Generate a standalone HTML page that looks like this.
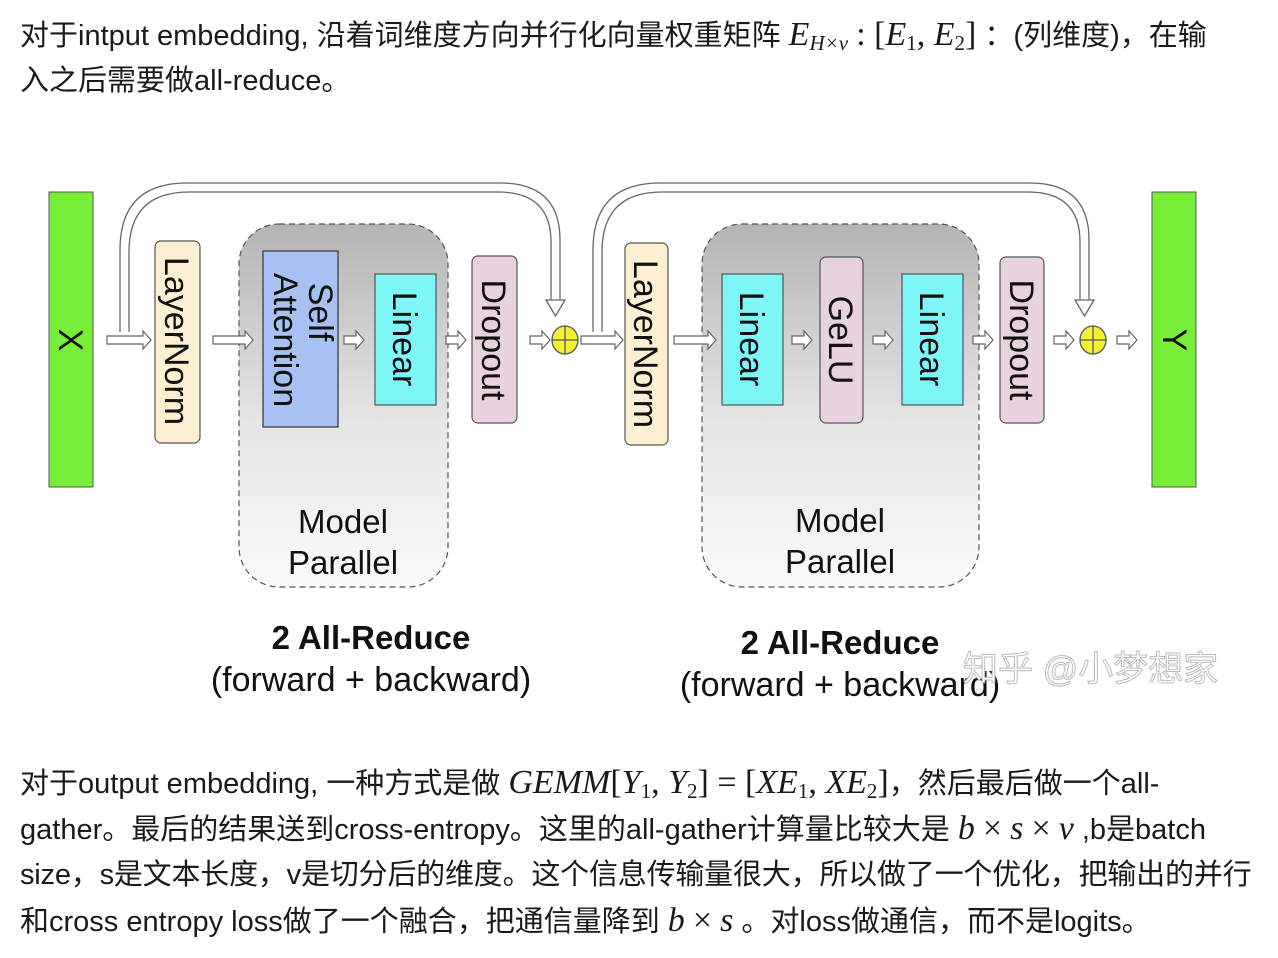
<!DOCTYPE html>
<html><head><meta charset="utf-8">
<style>
html,body{margin:0;padding:0;background:#fff;width:1278px;height:958px;overflow:hidden}
body{font-family:"Liberation Sans","Noto Sans CJK SC",sans-serif;color:#1a1a1a;font-size:29px;position:relative}
.l{position:absolute;left:20px;white-space:nowrap;line-height:46px;height:46px}
.m{font-family:"Liberation Serif","DejaVu Serif",serif;font-style:italic;font-size:34px}
.r{font-family:"Liberation Serif","DejaVu Serif",serif;font-size:34px}
sub{font-size:21px;line-height:0;vertical-align:-5px}
svg{position:absolute;left:0;top:0}
</style></head><body>
<div class="l" style="top:12px">对于intput embedding, 沿着词维度方向并行化向量权重矩阵 <span class="m">E<sub>H×v</sub></span> <span class="r">: [</span><span class="m">E</span><span class="r"><sub>1</sub>, </span><span class="m">E</span><span class="r"><sub>2</sub>]</span> ：(列维度)，在输</div>
<div class="l" style="top:58px">入之后需要做all-reduce。</div>

<svg width="1278" height="958" viewBox="0 0 1278 958" font-family="Liberation Sans, sans-serif">
<defs>
<linearGradient id="g" x1="0" y1="0" x2="0" y2="1">
<stop offset="0" stop-color="#b4b4b4"/><stop offset="0.55" stop-color="#e6e6e6"/><stop offset="1" stop-color="#fafafa"/></linearGradient>
</defs>
<rect x="49" y="192" width="44" height="295" fill="#78ee3a" stroke="#555" stroke-width="1"/>
<rect x="1152" y="192" width="44" height="295" fill="#78ee3a" stroke="#555" stroke-width="1"/>
<text transform="translate(59,340) rotate(90)" font-size="34" text-anchor="middle" fill="#111">X</text>
<text transform="translate(1163,340) rotate(90)" font-size="34" text-anchor="middle" fill="#111">Y</text>
<g fill="none" stroke="#666" stroke-width="1.3">
<path d="M120,332 V250 Q120,183 187,183 H500 Q560,183 560,240 V300"/>
<path d="M129,332 V252 Q129,192 189,192 H498 Q551,192 551,242 V300"/>
<path d="M593,332 V250 Q593,183 660,183 H1030 Q1089,183 1089,240 V300"/>
<path d="M602,332 V252 Q602,192 662,192 H1028 Q1080,192 1080,242 V300"/>
</g>
<polygon points="551,300 546,300 555.5,316 565,300 560,300" fill="#fff" stroke="#666" stroke-width="1.3"/>
<polygon points="1080,300 1075,300 1084.5,316 1094,300 1089,300" fill="#fff" stroke="#666" stroke-width="1.3"/>
<rect x="239" y="224" width="209" height="363" rx="40" fill="url(#g)" stroke="#555" stroke-width="1.2" stroke-dasharray="6,4"/>
<rect x="702" y="224" width="277" height="363" rx="40" fill="url(#g)" stroke="#555" stroke-width="1.2" stroke-dasharray="6,4"/>
<g stroke="#555" stroke-width="1.2">
<rect x="155" y="241" width="45" height="202" rx="6" fill="#fcefd2"/>
<rect x="263" y="251" width="75" height="176" fill="#a8c0f2" stroke="#333"/>
<rect x="375" y="274" width="61" height="131" fill="#7ef6f8"/>
<rect x="472" y="256" width="45" height="167" rx="6" fill="#e8d2e0"/>
<rect x="625" y="243" width="43" height="202" rx="6" fill="#fcefd2"/>
<rect x="722" y="274" width="61" height="131" fill="#7ef6f8"/>
<rect x="820" y="257" width="43" height="166" rx="6" fill="#e8d2e0"/>
<rect x="902" y="274" width="61" height="131" fill="#7ef6f8"/>
<rect x="1000" y="257" width="44" height="166" rx="6" fill="#e8d2e0"/>
</g>
<g font-size="34" fill="#111" text-anchor="middle">
<text transform="translate(165,341) rotate(90)">LayerNorm</text>
<text transform="translate(309,312) rotate(90)">Self</text>
<text transform="translate(274,340) rotate(90)">Attention</text>
<text transform="translate(393,339) rotate(90)">Linear</text>
<text transform="translate(482,340) rotate(90)">Dropout</text>
<text transform="translate(634,344) rotate(90)">LayerNorm</text>
<text transform="translate(740,339) rotate(90)">Linear</text>
<text transform="translate(829,340) rotate(90)">GeLU</text>
<text transform="translate(920,339) rotate(90)">Linear</text>
<text transform="translate(1010,340) rotate(90)">Dropout</text>
</g>
<g fill="#fff" stroke="#666" stroke-width="1.2">
<path d="M107,336 h36 v-5 l8,9 l-8,9 v-5 h-36 z"/>
<path d="M213,336 h32 v-5 l8,9 l-8,9 v-5 h-32 z"/>
<path d="M344,336 h12 v-5 l8,9 l-8,9 v-5 h-12 z"/>
<path d="M446,336 h12 v-5 l8,9 l-8,9 v-5 h-12 z"/>
<path d="M530,336 h12 v-5 l8,9 l-8,9 v-5 h-12 z"/>
<path d="M581,336 h34 v-5 l8,9 l-8,9 v-5 h-34 z"/>
<path d="M674,336 h34 v-5 l8,9 l-8,9 v-5 h-34 z"/>
<path d="M792,336 h12 v-5 l8,9 l-8,9 v-5 h-12 z"/>
<path d="M873,336 h12 v-5 l8,9 l-8,9 v-5 h-12 z"/>
<path d="M973,336 h12 v-5 l8,9 l-8,9 v-5 h-12 z"/>
<path d="M1054,336 h12 v-5 l8,9 l-8,9 v-5 h-12 z"/>
<path d="M1117,336 h12 v-5 l8,9 l-8,9 v-5 h-12 z"/>
</g>
<g stroke="#555" stroke-width="1.3">
<ellipse cx="565" cy="340" rx="13" ry="14" fill="#f4f03a"/>
<path d="M552,340 h26 M565,326 v28"/>
<ellipse cx="1093" cy="340" rx="13" ry="14" fill="#f4f03a"/>
<path d="M1080,340 h26 M1093,326 v28"/>
</g>
<g font-size="33" fill="#111" text-anchor="middle">
<text x="343" y="533">Model</text><text x="343" y="574">Parallel</text>
<text x="840" y="532">Model</text><text x="840" y="573">Parallel</text>
<text x="371" y="649" font-weight="bold">2 All-Reduce</text>
<text x="371" y="691" font-size="34">(forward + backward)</text>
<text x="840" y="654" font-weight="bold">2 All-Reduce</text>
<text x="840" y="696" font-size="34">(forward + backward)</text>
</g>
<text x="963" y="681" font-size="35" fill="#fff" stroke="#bbb" stroke-width="1" font-family="Liberation Sans, Noto Sans CJK SC, sans-serif">知乎 @小梦想家</text>
</svg>

<div class="l" style="top:760px">对于output embedding, 一种方式是做 <span class="m">GEMM</span><span class="r">[</span><span class="m">Y</span><span class="r"><sub>1</sub>, </span><span class="m">Y</span><span class="r"><sub>2</sub>] = [</span><span class="m">XE</span><span class="r"><sub>1</sub>, </span><span class="m">XE</span><span class="r"><sub>2</sub>]</span>，然后最后做一个all-</div>
<div class="l" style="top:806px">gather。最后的结果送到cross-entropy。这里的all-gather计算量比较大是 <span class="m">b</span> <span class="r">×</span> <span class="m">s</span> <span class="r">×</span> <span class="m">v</span> ,b是batch</div>
<div class="l" style="top:852px;letter-spacing:-0.2px">size，s是文本长度，v是切分后的维度。这个信息传输量很大，所以做了一个优化，把输出的并行</div>
<div class="l" style="top:898px">和cross entropy loss做了一个融合，把通信量降到 <span class="m">b</span> <span class="r">×</span> <span class="m">s</span> 。对loss做通信，而不是logits。</div>
</body></html>
